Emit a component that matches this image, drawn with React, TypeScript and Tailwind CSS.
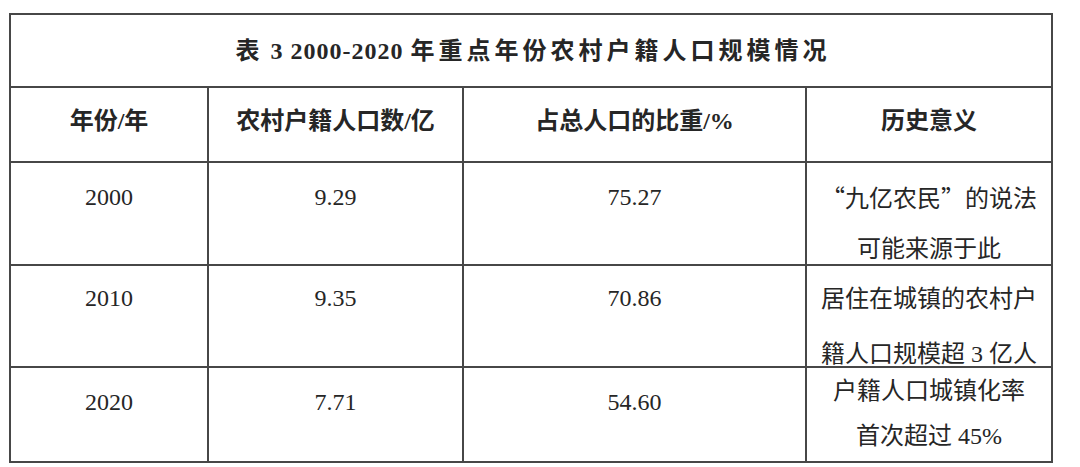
import type { ReactNode } from 'react';

const cjk = "font-['Noto_Sans_CJK_SC',sans-serif]";

const rows: {
  year: string;
  count: string;
  share: string;
  h: string;
  numPt: string;
  notePt: string;
  leading: string;
  note: ReactNode[];
}[] = [
  {
    year: '2000',
    count: '9.29',
    share: '75.27',
    h: 'h-[103px]',
    numPt: 'pt-[9px]',
    notePt: 'pt-[9px]',
    leading: 'leading-[50px]',
    note: [
      <>
        <span className={cjk}>“</span>九亿农民<span className={cjk}>”</span>的说法
      </>,
      '可能来源于此',
    ],
  },
  {
    year: '2010',
    count: '9.35',
    share: '70.86',
    h: 'h-[102px]',
    numPt: 'pt-[7px]',
    notePt: 'pt-[6px]',
    leading: 'leading-[55px]',
    note: ['居住在城镇的农村户', '籍人口规模超 3 亿人'],
  },
  {
    year: '2020',
    count: '7.71',
    share: '54.60',
    h: 'h-[93px]',
    numPt: 'pt-[9px]',
    notePt: 'pt-[1px]',
    leading: 'leading-[45px]',
    note: ['户籍人口城镇化率', '首次超过 45%'],
  },
];

const cols = 'grid grid-cols-[198px_255px_343px_1fr]';

export default function App() {
  return (
    <div className="w-[1080px] h-[467px] bg-white pt-[13px] pl-[9px] overflow-hidden font-['Liberation_Serif','Noto_Sans_CJK_SC',serif] text-[#262626]">
      <div className="w-[1044px] border-2 border-[#474747]">
        {/* Title */}
        <div className="h-[73px] border-b-2 border-[#474747] flex items-center justify-center text-[24px] font-bold whitespace-pre">
          <span className="tracking-[4px]">表</span>
          <span className="tracking-[1px]"> 3 2000-2020 </span>
          <span className="tracking-[4px] mr-[-4px]">年重点年份农村户籍人口规模情况</span>
        </div>

        {/* Header */}
        <div className={`${cols} h-[75px] border-b-2 border-[#474747] text-[24px] font-bold`}>
          <div className="border-r-2 border-[#474747] flex items-center justify-center pb-[8px]">年份/年</div>
          <div className="border-r-2 border-[#474747] flex items-center justify-center pb-[8px]">农村户籍人口数/亿</div>
          <div className="border-r-2 border-[#474747] flex items-center justify-center pb-[8px]">占总人口的比重/%</div>
          <div className="flex items-center justify-center pb-[8px]">历史意义</div>
        </div>

        {/* Data rows */}
        {rows.map((r, i) => (
          <div
            key={r.year}
            className={`${cols} ${r.h} text-[24px] ${i < rows.length - 1 ? 'border-b-2 border-[#474747]' : ''}`}
          >
            <div className={`border-r-2 border-[#474747] text-center leading-[50px] ${r.numPt}`}>{r.year}</div>
            <div className={`border-r-2 border-[#474747] text-center leading-[50px] ${r.numPt}`}>{r.count}</div>
            <div className={`border-r-2 border-[#474747] text-center leading-[50px] ${r.numPt}`}>{r.share}</div>
            <div className={`text-center whitespace-nowrap ${r.leading} ${r.notePt}`}>
              {r.note.map((line, j) => (
                <div key={j}>{line}</div>
              ))}
            </div>
          </div>
        ))}
      </div>
    </div>
  );
}
